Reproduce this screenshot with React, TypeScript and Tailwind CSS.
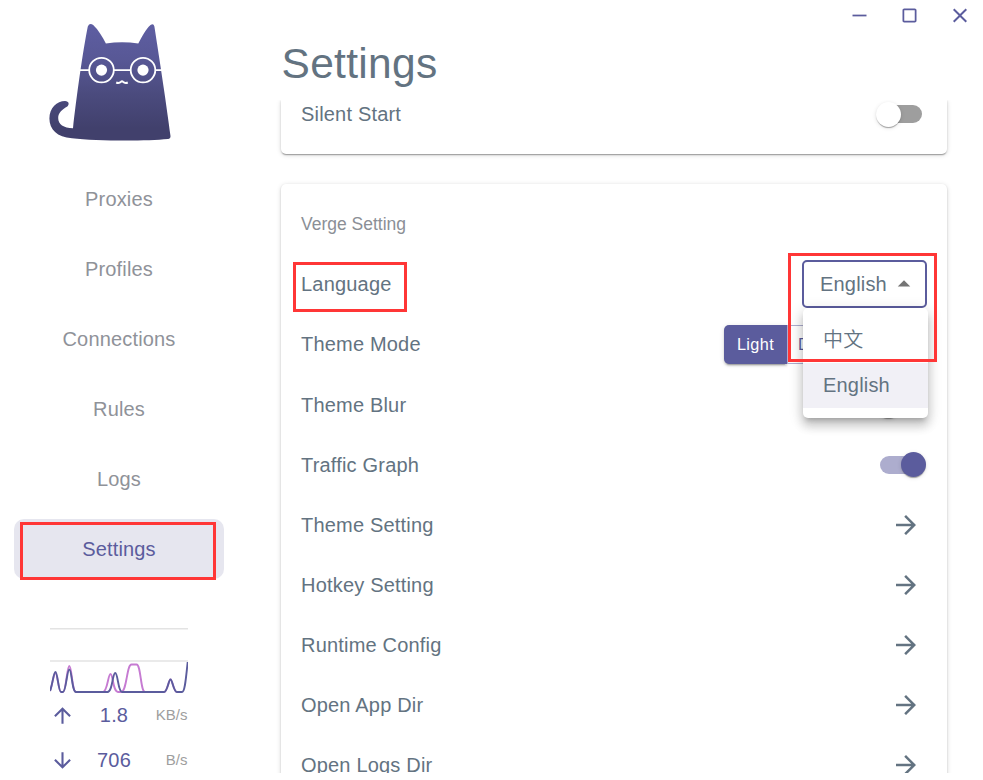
import React from "react";
import { MdArrowForward, MdArrowUpward, MdArrowDownward, MdArrowDropUp, MdClose, MdCropSquare, MdHorizontalRule } from "react-icons/md";

const navItems = ["Proxies", "Profiles", "Connections", "Rules", "Logs", "Settings"];
const linkRows = ["Theme Setting", "Hotkey Setting", "Runtime Config", "Open App Dir", "Open Logs Dir"];

const cardShadow =
  "shadow-[0_2px_1px_-1px_rgba(0,0,0,0.22),0_1px_2px_0_rgba(0,0,0,0.16),0_1px_5px_0_rgba(0,0,0,0.15)]";

function CatLogo() {
  return (
    <svg className="block h-[120px] w-[124px]" viewBox="48 22 124 120" fill="none">
      <defs>
        <linearGradient id="fur" x1="0" y1="24" x2="0" y2="140" gradientUnits="userSpaceOnUse">
          <stop offset="0" stopColor="#5e5ea2" />
          <stop offset="0.3" stopColor="#585896" />
          <stop offset="0.6" stopColor="#4b4b7e" />
          <stop offset="0.9" stopColor="#41406c" />
        </linearGradient>
      </defs>
      <path
        fill="url(#fur)"
        d="M73 128.3 C76 100 83 50 87.8 26.5 Q89.5 22.6 93.2 25 C98.5 30 102.500 37 105.900 43.600 Q122 40.900 138.300 43.600 C141.500 37.500 145.500 29.500 150.500 25 Q153.500 22.800 154.400 26.500 C159.500 59 167 108 170.500 136 Q170.700 138.600 168 139 C145 141.300 95 141 72 138.200 C57 137.500 49.400 129 49.400 118.500 C49.400 108 57 101 65 101 C69.200 101.300 69.500 104.500 67.300 106.500 C62.500 109.300 58.200 112.500 58.200 118 C58.200 124.500 63.500 128 73 128.300Z"
      />
      <g stroke="#fff" strokeWidth="1.8">
        <circle cx="101.500" cy="70.100" r="12.300" />
        <circle cx="143" cy="70.100" r="12.300" />
        <path d="M79 70.100H89.200M113.800 70.100H130.700M155.300 70.100H163" />
      </g>
      <circle cx="101.500" cy="70.100" r="5.600" fill="#fff" />
      <circle cx="143" cy="70.100" r="5.600" fill="#fff" />
      <path d="M116.200 82.500Q119 83.700 121 81.800Q122 80.800 123 81.800Q125 83.700 127.800 82.500" stroke="#fff" strokeWidth="2" />
    </svg>
  );
}

function TrafficGraph() {
  return (
    <svg className="block h-[68px] w-[138px]" viewBox="50 626 138 68" fill="none">
      <path d="M50 628.800H188M50 661H188" stroke="#e3e3e3" strokeWidth="1.500" />
      <path
        stroke="#c67bd2"
        strokeWidth="1.900"
        d="M50 691C52.500 685 53.500 673 55.500 673C57.500 673 58.500 692 61 692H63C66 692 67 666 69.300 666C71.800 666 72 692 76 692H103C107.500 692 108 674 110.500 674C113 674 113 692 118 692H121C127 692 126.500 664.500 131.500 664.500H136.500C141 664.500 140.500 692 145 692H164C167.500 692 168.500 679.500 170.500 679.500C172.500 679.500 173.500 692 177 692H182"
      />
      <path
        stroke="#5b5c9d"
        strokeWidth="1.900"
        d="M50 691C52.500 685 53.500 672 55.500 672C57.500 672 58.500 692 61 692H63C66 692 67 669.500 69.300 669.500C71.800 669.500 72 692 76 692H107.500C112.500 692 112.500 673 115.200 673C118 673 118 692 122 692H164C167.500 692 168.500 679.500 170.500 679.500C172.500 679.500 173.500 692 177 692H182C185 692 186 677 187.700 662"
      />
    </svg>
  );
}

function Switch({ on = false }: { on?: boolean }) {
  return (
    <div className={`relative mr-[5px] h-[18px] w-[42px] rounded-full ${on ? "-mt-px bg-[#adadce]" : "bg-[#9e9e9e]"}`}>
      <div
        className={`absolute -top-[3.5px] h-[25px] w-[25px] rounded-full shadow-[0_2px_1px_-1px_rgba(0,0,0,0.2),0_1px_1px_rgba(0,0,0,0.14),0_1px_4px_rgba(0,0,0,0.12)] ${
          on ? "-right-[4px] bg-[#5b5c9d]" : "-left-[4px] bg-white"
        }`}
      />
    </div>
  );
}

function Row({ label, children }: { label: string; children?: React.ReactNode }) {
  return (
    <div className="flex h-[60px] shrink-0 items-center justify-between tracking-[0.19px]">
      <span>{label}</span>
      {children}
    </div>
  );
}

function LanguageSelect() {
  return (
    <div className="relative z-10 h-12 w-[125px]">
      <div className="flex h-12 items-center rounded-[5px] border-2 border-[#5b5c9d] pl-4">
        <span>English</span>
        <MdArrowDropUp className="ml-[2px] h-[30px] w-[30px] shrink-0 text-[#757575]" />
      </div>
      <div className="absolute left-px top-12 w-[125px] rounded-[5px] bg-white py-[10px] shadow-[0_5px_5px_-3px_rgba(0,0,0,0.2),0_8px_10px_1px_rgba(0,0,0,0.14),0_3px_14px_2px_rgba(0,0,0,0.12)]">
        <div className="flex h-[45px] items-center pb-[3px] pl-5 font-['Noto_Sans_CJK_SC',sans-serif] font-[350]">中文</div>
        <div className="flex h-[45px] items-center bg-[#f1f0f6] pb-[2px] pl-5">English</div>
      </div>
    </div>
  );
}

function Speed({ up = false, value, unit }: { up?: boolean; value: string; unit: string }) {
  const Arrow = up ? MdArrowUpward : MdArrowDownward;
  return (
    <div className="flex h-[45px] w-[138px] items-center">
      <Arrow className="h-[25px] w-[25px] shrink-0 text-[#5b5c9d]" />
      <span className="w-[78px] pb-[2px] text-center text-xl tracking-[0.19px] text-[#5b5c9d]">{value}</span>
      <span className="flex-1 pr-[0.5px] text-right text-[15px] text-[#9e9e9e]">{unit}</span>
    </div>
  );
}

function Sidebar() {
  return (
    <aside className="flex h-[773px] w-[240px] shrink-0 flex-col overflow-hidden">
      <div className="pl-12 pt-[22px]">
        <CatLogo />
      </div>
      <nav className="mt-[27px] flex flex-col gap-[10px] pl-[14px]">
        {navItems.map((item) => (
          <div
            key={item}
            className={`flex h-[60px] w-[210px] items-center justify-center rounded-[10px] text-xl tracking-[0.16px] ${
              item === "Settings" ? "bg-[#e6e6ef] text-[#5b5c9d]" : "text-[#8f9299]"
            }`}
          >
            {item}
          </div>
        ))}
      </nav>
      <div className="mt-[47px] flex flex-col pl-[50px]">
        <TrafficGraph />
        <div className="-mt-px">
          <Speed up value="1.8" unit="KB/s" />
          <Speed value="706" unit="B/s" />
        </div>
      </div>
    </aside>
  );
}

export default function App() {
  return (
    <div className="relative flex h-[780px] w-[983px] overflow-hidden bg-white font-['Liberation_Sans',Arial,sans-serif] text-[#637381]">
      <Sidebar />
      <main className="flex h-[773px] flex-1 flex-col">
        <header className="flex h-[100px] shrink-0 justify-between">
          <h1 className="pl-[41.5px] pt-[38px] text-[42.5px] leading-[52px] tracking-[0.31px]">Settings</h1>
          <div className="flex h-[31px] items-center gap-[29px] pr-3 text-[#5b5c9d]">
            <MdHorizontalRule className="h-[21px] w-[21px]" />
            <MdCropSquare className="h-[21px] w-[21px]" />
            <MdClose className="h-[23px] w-[22px]" viewBox="1 1 22 22" />
          </div>
        </header>
        <div className="flex flex-1 flex-col overflow-hidden pl-[41px] pr-9 text-xl">
          <section className={`flex h-[54px] shrink-0 items-start rounded-b-[5px] bg-white pl-5 pr-5 ${cardShadow}`}>
            <div className="-mt-4 w-full">
              <Row label="Silent Start">
                <Switch />
              </Row>
            </div>
          </section>
          <section className={`mt-[30px] flex h-[700px] shrink-0 flex-col rounded-[5px] bg-white pl-5 pr-5 pt-[10px] ${cardShadow}`}>
            <div className="flex h-[60px] shrink-0 items-center text-[17.5px] text-[#8b8f96]">Verge Setting</div>
            <Row label="Language">
              <LanguageSelect />
            </Row>
            <Row label="Theme Mode">
              <div className="flex h-[39px] w-[203px] rounded-[5px] text-[16.25px] tracking-[0.4px]">
                <div className="flex w-[63px] items-center justify-center rounded-l-[5px] bg-[#5b5c9d] text-white shadow-[0_3px_1px_-2px_rgba(0,0,0,0.2),0_2px_2px_rgba(0,0,0,0.14),0_1px_5px_rgba(0,0,0,0.12)]">
                  Light
                </div>
                <div className="flex w-[62px] items-center border border-[#adadce] pl-[10px] text-[#5b5c9d]">Dark</div>
                <div className="flex flex-1 items-center justify-center rounded-r-[5px] border border-l-0 border-[#adadce] text-[#5b5c9d]">
                  System
                </div>
              </div>
            </Row>
            <div className="mt-px flex flex-col">
              <Row label="Theme Blur">
                <Switch />
              </Row>
              <Row label="Traffic Graph">
                <Switch on />
              </Row>
              {linkRows.map((label) => (
                <Row key={label} label={label}>
                  <MdArrowForward className="mr-[6px] h-[30px] w-[30px]" />
                </Row>
              ))}
            </div>
          </section>
        </div>
      </main>
      <div className="absolute left-5 top-[522px] z-20 h-[58px] w-[196px] border-[3px] border-[#ff3636]" />
      <div className="absolute left-[293px] top-[262px] z-20 h-[50px] w-[114px] border-[3px] border-[#ff3636]" />
      <div className="absolute left-[788px] top-[253px] z-20 h-[109px] w-[149px] border-[3px] border-[#ff3636]" />
    </div>
  );
}
